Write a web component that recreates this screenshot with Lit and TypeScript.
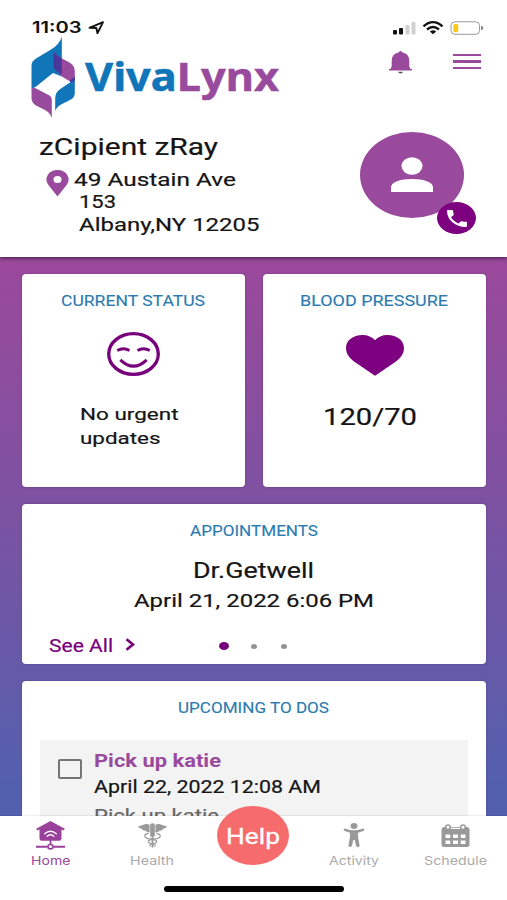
import { LitElement, html, svg, css } from "lit";
import { customElement } from "lit/decorators.js";

/* A single line of text fitted to a given width; its baseline sits `size` px below the box top. */
const line = (text: string, width: number, size: number, cls = "") => html`
  <svg class="line ${cls}" width=${width} height=${Math.round(size * 1.2)}>
    <text x="0" y=${size} font-size=${size} textLength=${width} lengthAdjust="spacingAndGlyphs">${text}</text>
  </svg>`;

const icons = {
  home: svg`<path d="M14.500 0 28.800 7.800 27.800 9.600 25.500 8.600V17.500Q25.500 19.800 23.300 19.800H5.700Q3.500 19.800 3.500 17.500V8.600L1.200 9.600.2 7.800Z"/>
    <g fill="none" stroke="#fff" stroke-width="1.400" stroke-linecap="round"><path d="M8.700 12.800Q14.500 7.600 20.300 12.800M11.200 15.300Q14.500 12.400 17.800 15.300"/></g>
    <path d="M13.600 19h1.800v4.500h-1.800zM0 24.800h11v1.900H0zM18 24.800h11v1.900H18z"/><ellipse cx="14.500" cy="25.700" rx="2.600" ry="2.200" fill="#fff" stroke="currentColor" stroke-width="1.700"/>`,
  health: svg`<path d="M12.200 1.500Q14.500-.8 16.800 1.500V13.500h-4.600zM11.600 1.800Q8 .2 5.500 1.800L0 3.500Q.8 5.500 3.800 5.800 4.500 7.800 7.500 7.800 8.500 9.500 11.600 9.500ZM17.400 1.800Q21 .2 23.500 1.800L29 3.500Q28.200 5.500 25.200 5.800 24.500 7.800 21.500 7.800 20.500 9.500 17.400 9.500Z"/>
    <path d="M13.600 13h1.800v11.500h-1.800z"/><g fill="none" stroke="currentColor" stroke-width="1.300"><path d="M10.500 10.500Q6 11 7 13.800 8.500 15.700 14 16.200 19.500 17.200 18.500 19 17.500 20.800 14 21 11 21.600 12.500 23.500M18.500 10.500Q23 11 22 13.800 20.500 15.700 15 16.200 9.500 17.200 10.500 19 11.500 20.800 15 21 18 21.600 16.500 23.500"/></g>`,
  activity: svg`<ellipse cx="11" cy="3" rx="3.500" ry="3"/><path d="M.6 6.200Q1.200 5.200 2.600 5.700 7 7.200 11 7.200 15 7.200 19.400 5.700 20.800 5.200 21.400 6.200 21.600 7.500 20.300 8L15 9.700V14L16.600 22.600Q16.500 24 15 24 13.500 24 13.100 22.800L11.700 17H10.300L8.900 22.800Q8.500 24 7 24 5.500 24 5.400 22.600L7 14V9.700L1.700 8Q.4 7.500.6 6.200Z"/>`,
  schedule: svg`<path fill-rule="evenodd" d="M3 3H26Q28.500 3.200 28.500 5.700V20.500Q28.500 23 26 23H3Q.5 23 .5 20.500V5.700Q.5 3.200 3 3ZM4.500 10.500V14H9.300V10.500ZM12 10.500V14H17V10.500ZM19.700 10.500V14H24.500V10.500ZM4.500 16.500V20H9.300V16.500ZM12 16.500V20H17V16.500ZM19.700 16.500V20H24.500V16.500Z"/>
    <path d="M9 4.400H20" stroke="#fff" stroke-width="1.200"/><g fill="#fff" stroke="currentColor" stroke-width="1.500"><ellipse cx="7" cy="3.200" rx="2.300" ry="2.200"/><ellipse cx="22" cy="3.200" rx="2.300" ry="2.200"/></g>`,
};

@customElement("app-root")
export class AppRoot extends LitElement {
  static styles = css`
    :host { display: flex; flex-direction: column; width: 507px; height: 900px; overflow: hidden; background: #fff; color: #151515; }
    svg { display: block; flex: none; overflow: visible; fill: currentColor; }
    .line { font-family: Roboto, "Liberation Sans", sans-serif; stroke: currentColor; stroke-width: .2px; }
    .sys { font-family: Inter, "Liberation Sans", sans-serif; stroke: none; }
    .semi { font-weight: 600; }
    .bold { font-weight: 700; stroke: none; }
    .blue { color: #2b7bb0; stroke-width: .12px; }
    .violet { color: #994a9c; }
    .plum { color: #77007b; }
    .grey { color: #666; }
    header { height: 257px; flex: none; position: relative; z-index: 1; background: #fff; box-shadow: 0 1px 4px rgba(30, 10, 40, .75); box-sizing: border-box; }
    .status { display: flex; height: 36px; box-sizing: border-box; padding: 17px 24px 0 32px; color: #111; }
    .arrow { margin: 3.500px 0 0 6px; }
    .signals { margin: 3.500px 0 0 auto; }
    .brand { display: flex; height: 82px; padding: 0 26px 0 30.500px; }
    .word { margin: 15.500px 0 0 10px; font-family: "Noto Sans", "Open Sans", sans-serif; font-weight: 700; }
    .viva { fill: #1175b9; stroke: #1175b9; stroke-width: .5px; }
    .lynx { fill: #984a9d; stroke: #984a9d; stroke-width: .5px; }
    .bell { margin: 15px 41px 0 auto; }
    .menu { display: grid; gap: 4px; align-content: start; padding-top: 18px; width: 28px; }
    .menu i { height: 2.400px; background: #994a9c; }
    .profile { display: flex; justify-content: space-between; padding: 14px 43px 0 38.500px; }
    .address { display: flex; margin-top: 6.600px; padding-left: 7px; }
    .address .line { height: 22.700px; }
    .lines { margin-left: 5.500px; }
    .lines .line + .line { margin-left: 5px; }
    .pin { margin-top: 3px; }
    .avatar { position: relative; width: 104px; height: 86px; border-radius: 50%; background: #994a9c; color: #fff; display: flex; justify-content: center; }
    .avatar > svg { margin-top: 25px; }
    .call { position: absolute; left: 77px; top: 70px; width: 39px; height: 32px; border-radius: 50%; background: #7c007f; display: flex; align-items: center; justify-content: center; }
    main { flex: 1; min-height: 0; overflow: hidden; background: linear-gradient(#9b499b, #7f51a1 41%, #5260ae 96%); padding: 17px 21px 0 22px; display: grid; grid-template-columns: 1fr 1fr; grid-template-rows: 213px 160px 213px; gap: 17px 18px; }
    .card { background: #fff; border-radius: 4px; display: flex; flex-direction: column; align-items: center; box-sizing: border-box; box-shadow: 0 0 2px rgba(60, 20, 80, .4); }
    .card > .blue { margin-left: -1px; }
    .wide { grid-column: 1 / -1; }
    .half { padding-top: 17px; }
    .appts { padding-top: 17px; }
    .todos { padding: 17px 18px 0; }
    .smile { margin-top: 24px; }
    .note { align-self: stretch; padding: 26.500px 0 0 58px; }
    .note .line { height: 24px; }
    .heart { margin-top: 27px; }
    .bp { margin: 25.500px 9px 0 0; }
    .doctor { margin: 18px 1px 0 0; }
    .when { margin: 5.500px 0 0 -1px; }
    .foot { align-self: stretch; display: grid; grid-template-columns: 1fr auto 1fr; align-items: center; margin-top: 23px; padding: 0 28px 0 27px; }
    .all { display: flex; align-items: center; gap: 12px; }
    .dots { display: flex; align-items: center; gap: 24px; padding-top: 4px; margin-left: -1px; }
    .dots i { width: 6px; height: 5px; border-radius: 50%; background: #929292; }
    .dots .on { width: 10px; height: 8px; margin-right: -2px; background: #77007b; }
    .task { align-self: stretch; display: flex; background: #f3f3f3; margin-top: 25px; height: 130px; }
    .box { width: 24px; height: 20px; box-sizing: border-box; border: 2px solid #757575; border-radius: 2px; margin: 19px 12px 0 18px; }
    .task .line { height: 26px; }
    .task .line.grey { padding-top: 3px; }
    .tasktext { padding-top: 9px; margin-left: -.5px; }
    nav { position: relative; flex: none; height: 84px; background: #fff; box-shadow: 0 -1px 1px rgba(0, 0, 0, .06); display: grid; grid-template-columns: repeat(5, 101.200px); padding-left: .3px; z-index: 1; }
    .tab { display: flex; flex-direction: column; align-items: center; color: #aaa; }
    .tab.on { color: #994a9c; }
    .glyph { display: flex; align-items: flex-start; }
    .glyph svg { color: #999; }
    .on .glyph svg { color: #99409a; }
    .help { width: 72px; height: 59px; margin-top: -10.500px; border-radius: 50%; background: #f66c6d; color: #fff; display: flex; align-items: center; justify-content: center; }
    .help .line { margin-top: -1px; stroke-width: .3px; }
    .bar { position: absolute; left: 164px; bottom: 8.500px; width: 180px; height: 5.500px; border-radius: 3px; background: #000; }
  `;

  private tab(name: "home" | "health" | "activity" | "schedule", label: string, width: number, w: number, h: number, top: number) {
    return html`<div class="tab ${name === "home" ? "on" : ""}">
      <div class="glyph" style="padding-top:${top}px;height:${37 - top}px"><svg width=${w} height=${h}>${icons[name]}</svg></div>
      ${line(label, width, 11.7, "sys")}
    </div>`;
  }

  render() {
    return html`
      <header>
        <div class="status">
          ${line("11:03", 49.5, 16, "sys semi")}
          <svg class="arrow" width="17" height="14"><path d="M1.500 6.800 15 1.200 9.500 12.200 8.300 7Z" fill="none" stroke="#111" stroke-width="1.900" stroke-linejoin="round"/></svg>
          <svg class="signals" width="90" height="14">
            <rect x="0" y="9" width="4" height="4.500" rx="1"/><rect x="6" y="7" width="4" height="6.500" rx="1"/>
            <g fill="#d0d0d0"><rect x="12.500" y="4" width="4" height="9.500" rx="1"/><rect x="18.500" y="1" width="4" height="12.500" rx="1"/></g>
            <g fill="none" stroke="#111" stroke-width="2.300"><path d="M30.500 5.300Q40-3 49.500 5.300M34 8.500Q40 3.500 46 8.500"/></g>
            <path d="M36.800 10.500Q40 8 43.200 10.500L40 13.300Z"/>
            <rect x="58" y=".8" width="28.500" height="12.500" rx="3.800" fill="#fff" stroke="#999" stroke-width="1"/>
            <rect x="60.300" y="3" width="5" height="8.200" rx="1.500" fill="#f7c81e"/><path d="M88 4.800q2.300.3 2.300 2.300T88 9.300z" fill="#888"/>
          </svg>
        </div>
        <div class="brand">
          <svg width="44" height="82">
            <path d="M30.800.7V40.500L22 37 4.800 50.700.5 53V29.500Q.5 25 5 22.500L20 13.500Q28.500 8.500 30.800.7Z" fill="#1175b9"/>
            <path d="M22.500 15.300Q25 19.500 31.500 22.800L38.500 26.500Q43.800 29.500 43.800 35V45.500L40 46 30.800 40.500 22.500 31.300Z" fill="#984a9d"/>
            <path d="M22.500 15.300Q25 19.500 30.800 22.500V38.500Q24.500 35 22.500 31.300Z" fill="#49389a"/>
            <path d="M40 45.500 43.800 42V57Q43.800 61.500 39 64L30 68.500Q25.500 71 24.200 75V62Q24.200 56.500 29 53Z" fill="#1175b9"/>
            <path d="M.5 52.500 3 51.500 17 58.500Q20.800 60.500 20.800 64V82.300Q19 76.500 14 74L5 69.500Q.5 67 .5 62Z" fill="#984a9d"/>
            <path d="M4.500 51.500 20 40Q22 38.500 24.500 39.500L39.500 46 29 53Q25 55.500 22.500 61Q20.500 60 17 58.500Z" fill="#fff"/>
            <path d="M38.500 45 43.800 40.500V44L40.500 46.500Z" fill="#49389a"/>
          </svg>
          <svg class="word" width="194" height="44"><text y="39" font-size="39.500" textLength="194" lengthAdjust="spacingAndGlyphs"><tspan class="viva">Viva</tspan><tspan class="lynx">Lynx</tspan></text></svg>
          <svg class="bell violet" width="23" height="23"><path d="M11.500 0Q13 0 13.500 1.600 20.300 3 20.300 10V15.500L21.500 18H23V19.500H0V18H1.500L2.700 15.500V10Q2.700 3 9.500 1.600 10 0 11.500 0Z"/><path d="M9 20.700h5q-.5 1.800-2.500 1.800T9 20.700z" fill="#555"/></svg>
          <div class="menu"><i></i><i></i><i></i></div>
        </div>
        <div class="profile">
          <div>
            ${line("zCipient zRay", 179, 23.3)}
            <div class="address">
              <svg class="pin violet" width="23" height="27"><path fill-rule="evenodd" d="M11.500 0Q18 0 21 4.500 25 10.500 19 17L11.500 26.500 4 17Q-2 10.500 2 4.500 5 0 11.500 0ZM11.500 6A4 3.500 0 1 0 11.500 13 4 3.500 0 1 0 11.500 6Z"/></svg>
              <div class="lines">
                ${line("49 Austain Ave", 162, 18.7)}
                ${line("153", 37, 18.7)}
                ${line("Albany,NY 12205", 180.5, 18.7)}
              </div>
            </div>
          </div>
          <div class="avatar">
            <svg width="42" height="36"><ellipse cx="21" cy="9" rx="10.500" ry="8.800"/><path d="M0 35V30.500C0 25 9 22 21 22S42 25 42 30.500V35Z"/></svg>
            <div class="call"><svg width="20" height="17" viewBox="3 3 18 18" preserveAspectRatio="none"><path d="M6.620 10.790c1.440 2.830 3.760 5.140 6.590 6.590l2.200-2.200c.27-.27.67-.36 1.020-.24 1.120.37 2.330.57 3.570.57.55 0 1 .45 1 1V20c0 .55-.45 1-1 1-9.390 0-17-7.610-17-17 0-.55.45-1 1-1h3.500c.55 0 1 .45 1 1 0 1.250.2 2.450.57 3.570.11.35.03.74-.25 1.020l-2.200 2.200z"/></svg></div>
          </div>
        </div>
      </header>
      <main>
        <section class="card half">
          ${line("CURRENT STATUS", 144, 14.5, "blue")}
          <svg class="smile" width="53" height="44"><g fill="none" stroke="#77007b" stroke-width="3.300"><ellipse cx="26.500" cy="22" rx="24.800" ry="20.300"/><path d="M13.300 27.800Q26.500 40.500 39.700 27.800" stroke-width="3"/><path d="M10.200 18.500Q16.500 15 22.500 18.500M30.500 18.500Q36.500 15 42.800 18.500" stroke-width="2.800"/></g></svg>
          <div class="note">${line("No urgent", 98.5, 17)}${line("updates", 80.5, 17)}</div>
        </section>
        <section class="card half">
          ${line("BLOOD PRESSURE", 148, 14.5, "blue")}
          <svg class="heart" width="58" height="41"><path fill="#7c007f" d="M29 5.200C32 2 36 0 41.500 0 51 0 58 5.500 58 13 58 18.500 55 22.500 50 26.500L29 40.700 8 26.500C3 22.500 0 18.500 0 13 0 5.500 7 0 16.500 0 22 0 26 2 29 5.200Z"/></svg>
          <div class="bp">${line("120/70", 94, 23)}</div>
        </section>
        <section class="card wide appts">
          ${line("APPOINTMENTS", 128, 14.5, "blue")}
          <div class="doctor">${line("Dr.Getwell", 121, 22)}</div>
          <div class="when">${line("April 21, 2022 6:06 PM", 240, 19)}</div>
          <div class="foot">
            <div class="all plum">${line("See All", 64, 17.8)}<svg width="10" height="13"><path d="M1.500 1.200 8 6.500 1.500 11.800" fill="none" stroke="currentColor" stroke-width="2.600"/></svg></div>
            <div class="dots"><i class="on"></i><i></i><i></i></div>
          </div>
        </section>
        <section class="card wide todos">
          ${line("UPCOMING TO DOS", 151, 14.5, "blue")}
          <div class="task">
            <div class="box"></div>
            <div class="tasktext">
              ${line("Pick up katie", 127, 18, "bold violet")}
              ${line("April 22, 2022 12:08 AM", 227, 18)}
              ${line("Pick up katie", 125, 18, "grey")}
            </div>
          </div>
        </section>
      </main>
      <nav>
        ${this.tab("home", "Home", 39.5, 29, 28, 4.5)}
        ${this.tab("health", "Health", 44, 29, 25, 7)}
        <div class="tab"><div class="help">${line("Help", 54, 21.5)}</div></div>
        ${this.tab("activity", "Activity", 50, 22, 24, 7)}
        ${this.tab("schedule", "Schedule", 63, 29, 23, 7.5)}
        <div class="bar"></div>
      </nav>
    `;
  }
}
